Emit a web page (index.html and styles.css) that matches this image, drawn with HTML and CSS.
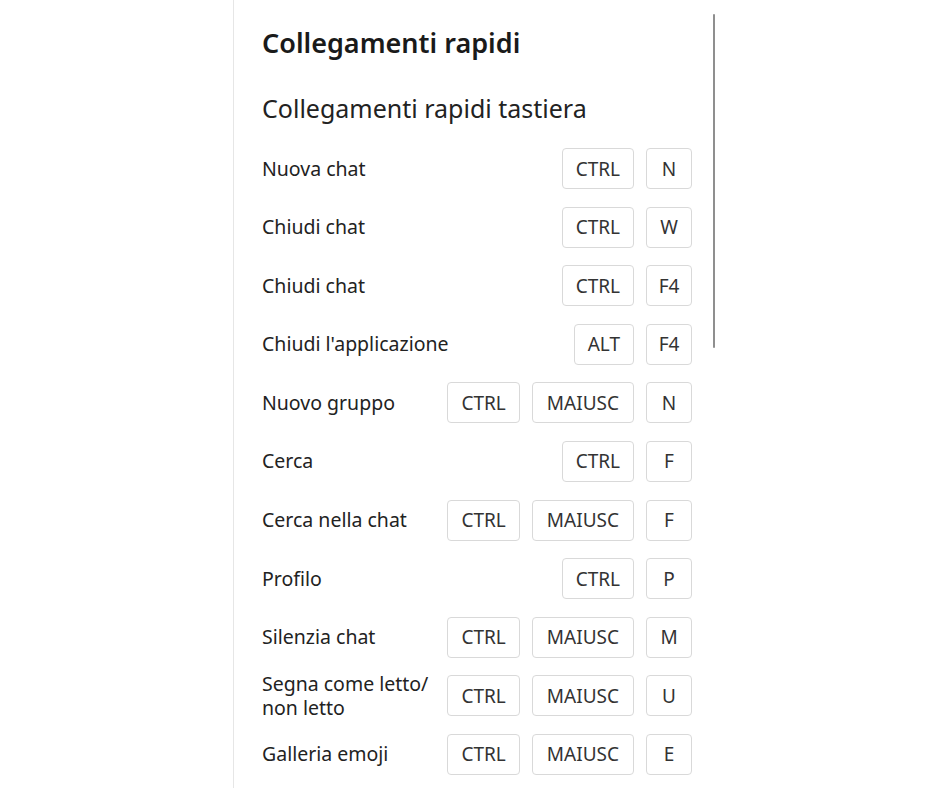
FILE: index.html
```html
<!DOCTYPE html>
<html lang="it">
  <head>
    <meta charset="UTF-8" />
    <meta name="viewport" content="width=device-width, initial-scale=1.0" />
    <title>Collegamenti rapidi</title>
    <link rel="stylesheet" href="styles.css">
  </head>
  <body>
    <div class="panel">
      <div class="scroll-thumb"></div>
      <h1>Collegamenti rapidi</h1>
      <h2>Collegamenti rapidi tastiera</h2>

      <div class="shortcuts">
        <div class="shortcut">
          <span class="label">Nuova chat</span>
          <div class="keys"><span class="key">CTRL</span><span class="key single">N</span></div>
        </div>
        <div class="shortcut">
          <span class="label">Chiudi chat</span>
          <div class="keys"><span class="key">CTRL</span><span class="key single">W</span></div>
        </div>
        <div class="shortcut">
          <span class="label">Chiudi chat</span>
          <div class="keys"><span class="key">CTRL</span><span class="key single">F4</span></div>
        </div>
        <div class="shortcut">
          <span class="label">Chiudi l'applicazione</span>
          <div class="keys"><span class="key">ALT</span><span class="key single">F4</span></div>
        </div>
        <div class="shortcut">
          <span class="label">Nuovo gruppo</span>
          <div class="keys"><span class="key">CTRL</span><span class="key">MAIUSC</span><span class="key single">N</span></div>
        </div>
        <div class="shortcut">
          <span class="label">Cerca</span>
          <div class="keys"><span class="key">CTRL</span><span class="key single">F</span></div>
        </div>
        <div class="shortcut">
          <span class="label">Cerca nella chat</span>
          <div class="keys"><span class="key">CTRL</span><span class="key">MAIUSC</span><span class="key single">F</span></div>
        </div>
        <div class="shortcut">
          <span class="label">Profilo</span>
          <div class="keys"><span class="key">CTRL</span><span class="key single">P</span></div>
        </div>
        <div class="shortcut">
          <span class="label">Silenzia chat</span>
          <div class="keys"><span class="key">CTRL</span><span class="key">MAIUSC</span><span class="key single">M</span></div>
        </div>
        <div class="shortcut">
          <span class="label">Segna come letto/ non letto</span>
          <div class="keys"><span class="key">CTRL</span><span class="key">MAIUSC</span><span class="key single">U</span></div>
        </div>
        <div class="shortcut">
          <span class="label">Galleria emoji</span>
          <div class="keys"><span class="key">CTRL</span><span class="key">MAIUSC</span><span class="key single">E</span></div>
        </div>
      </div>
    </div>
  </body>
</html>
```

FILE: styles.css
```css
html,
body {
  margin: 0;
  height: 100%;
  background-color: #fff;
}

body {
  font-family: "Noto Sans", "Open Sans", sans-serif;
  color: #1f1f1f;
  overflow: hidden;
}

.panel {
  position: relative;
  margin-left: 233px;
  width: 488px;
  height: 100%;
  border-left: 1px solid #e6e6e6;
  padding: 0 28px 0 28px;
  box-sizing: border-box;
}

.scroll-thumb {
  position: absolute;
  top: 14px;
  left: 479px;
  width: 2px;
  height: 334px;
  background-color: #8f8f8f;
  border-radius: 1px;
}

h1 {
  margin: 0;
  padding-top: 26px;
  font-size: 27px;
  line-height: 34px;
  font-weight: 600;
  color: #1a1a1a;
}

h2 {
  margin: 31px 0 0;
  font-size: 25px;
  line-height: 34px;
  font-weight: 400;
  color: #222;
}

.shortcuts {
  display: flex;
  flex-direction: column;
  gap: 17.6px;
  margin-top: 23px;
  width: 430px;
}

.shortcut {
  display: flex;
  align-items: center;
  justify-content: space-between;
  gap: 12px;
  height: 41px;
}

.label {
  font-size: 19.5px;
  line-height: 24px;
  color: #222;
}

.keys {
  display: flex;
  gap: 12px;
  flex-shrink: 0;
}

.key {
  display: flex;
  align-items: center;
  justify-content: center;
  height: 41px;
  padding: 0 13px;
  box-sizing: border-box;
  border: 1px solid #d9d9d9;
  border-radius: 4px;
  font-size: 19px;
  color: #333;
}

.key.wide,
.keys .key:nth-child(2):not(.single) {
  padding: 0 14px;
}

.key.single {
  width: 46px;
  padding: 0;
}
```
